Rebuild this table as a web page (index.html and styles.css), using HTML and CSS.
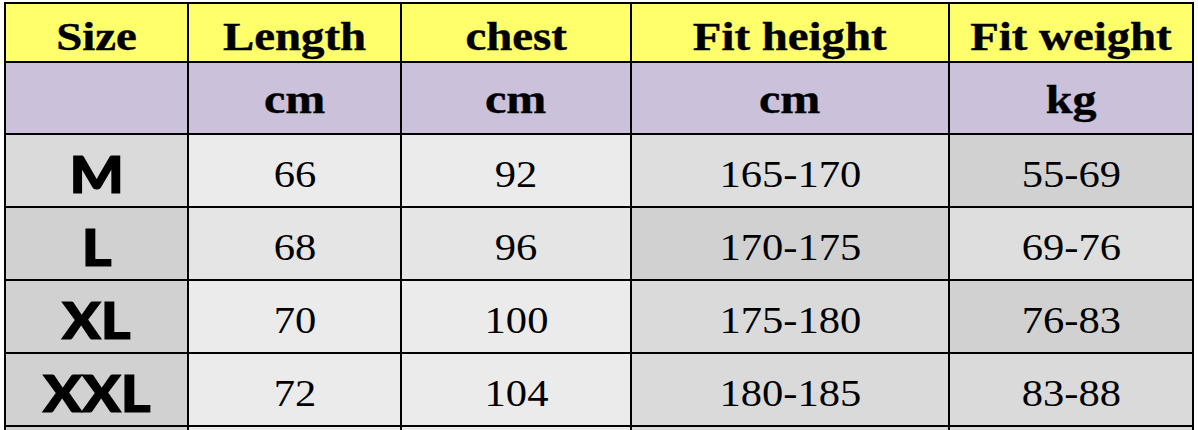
FILE: index.html
```html
<!DOCTYPE html>
<html>
<head>
<meta charset="utf-8">
<link rel="stylesheet" href="styles.css">
</head>
<body>
<div class="topline"></div>
<div class="chart">
  <div class="c hd"><span class="t">Size</span></div>
  <div class="c hd"><span class="t">Length</span></div>
  <div class="c hd"><span class="t">chest</span></div>
  <div class="c hd"><span class="t">Fit height</span></div>
  <div class="c hd"><span class="t">Fit weight</span></div>

  <div class="c un"></div>
  <div class="c un"><span class="t">cm</span></div>
  <div class="c un"><span class="t">cm</span></div>
  <div class="c un"><span class="t">cm</span></div>
  <div class="c un"><span class="t">kg</span></div>

  <div class="c sz g3"><span class="s">M</span></div>
  <div class="c dt g1"><span class="t">66</span></div>
  <div class="c dt g1"><span class="t">92</span></div>
  <div class="c dt g2"><span class="t">165-170</span></div>
  <div class="c dt g4"><span class="t">55-69</span></div>

  <div class="c sz g4"><span class="s">L</span></div>
  <div class="c dt g5"><span class="t">68</span></div>
  <div class="c dt g5"><span class="t">96</span></div>
  <div class="c dt g4"><span class="t">170-175</span></div>
  <div class="c dt g2"><span class="t">69-76</span></div>

  <div class="c sz g4"><span class="s">XL</span></div>
  <div class="c dt g1"><span class="t">70</span></div>
  <div class="c dt g1"><span class="t">100</span></div>
  <div class="c dt g3"><span class="t">175-180</span></div>
  <div class="c dt g4"><span class="t">76-83</span></div>

  <div class="c sz g4"><span class="s">XXL</span></div>
  <div class="c dt g1"><span class="t">72</span></div>
  <div class="c dt g1"><span class="t">104</span></div>
  <div class="c dt g3"><span class="t">180-185</span></div>
  <div class="c dt g3"><span class="t">83-88</span></div>

  <div class="c sz g4"></div>
  <div class="c dt g1"></div>
  <div class="c dt g1"></div>
  <div class="c dt g3"></div>
  <div class="c dt g3"></div>
</div>
</body>
</html>
```

FILE: styles.css
```css
html, body {
  margin: 0;
  padding: 0;
  background: #ffffff;
  overflow: hidden;
}

.topline {
  height: 2px;
}

.chart {
  margin-left: 4px;
  width: 1190px;
  display: grid;
  grid-template-columns: 181px 211px 228px 316px 242px;
  grid-template-rows: 57px 70px 71px 71px 71px 71px 71px;
  gap: 2px;
  padding: 2px;
  background: #000000;
  box-sizing: border-box;
}

.c {
  display: flex;
  align-items: center;
  justify-content: center;
  overflow: hidden;
}

.t {
  display: inline-block;
  transform: scaleX(1.2);
  white-space: nowrap;
}

.hd {
  background: #ffff6b;
  font-family: "Liberation Serif", "Times New Roman", serif;
  font-weight: bold;
  font-size: 39px;
  line-height: 1;
  padding-top: 8px;
  -webkit-text-stroke: 0.4px #000;
}

.un {
  background: #cbc1db;
  font-family: "Liberation Serif", "Times New Roman", serif;
  font-weight: bold;
  font-size: 40px;
  line-height: 1;
  padding-top: 4px;
  -webkit-text-stroke: 0.4px #000;
}

.dt {
  font-family: "Liberation Serif", "Times New Roman", serif;
  font-size: 38px;
  line-height: 1;
  color: #000;
  padding-top: 6px;
}

.dt .t {
  transform: scaleX(1.12);
}

.sz {
  font-family: Lato, "DejaVu Sans", sans-serif;
  font-weight: 900;
  font-size: 52px;
  line-height: 1;
  padding-top: 5px;
}

.s {
  display: inline-block;
  transform: scaleX(1.1);
  -webkit-text-stroke: 1.2px #000;
}

.g1 { background: #ebebeb; }
.g5 { background: #e5e5e5; }
.g2 { background: #dedede; }
.g3 { background: #dadada; }
.g4 { background: #d1d1d1; }
```
